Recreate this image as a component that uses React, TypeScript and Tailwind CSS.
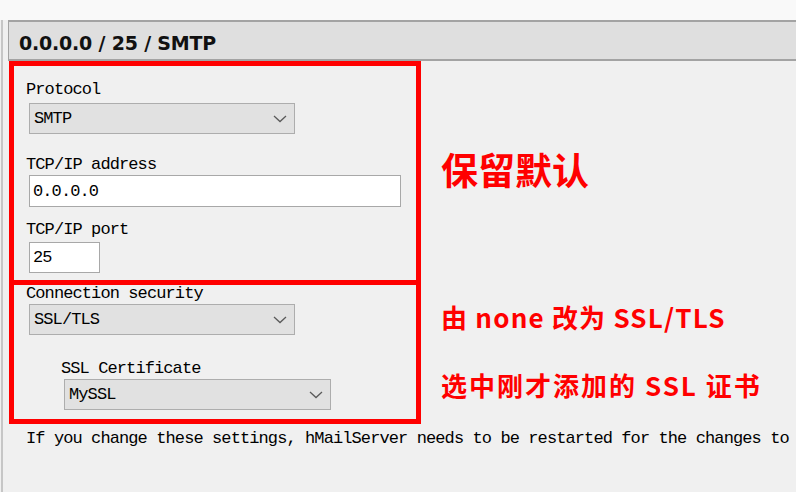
import React from "react";

const mono = "font-['Liberation_Mono',monospace] text-[17px] leading-[17px] tracking-[-0.9px] text-black whitespace-nowrap";

function Chevron() {
  return (
    <svg width="14" height="8" viewBox="0 0 14 8" className="mr-[7px] shrink-0">
      <polyline points="1,1 7,6.5 13,1" fill="none" stroke="#5a5a5a" strokeWidth="1.3" />
    </svg>
  );
}

function Select({ value, w, ml, mt }: { value: string; w: string; ml: string; mt: string }) {
  return (
    <div className={`${w} ${ml} ${mt} h-[31px] bg-[#e1e1e1] border border-[#adadad] flex items-center pl-[4px]`}>
      <span className={`${mono} flex-1`}>{value}</span>
      <Chevron />
    </div>
  );
}

export default function App() {
  return (
    <div className="w-[796px] h-[492px] bg-[#f0f0f0] flex flex-col overflow-hidden">
      <div className="h-[20px] bg-[#f9f9f9] shrink-0" />
      <div className="flex flex-1 min-h-0">
        <div className="w-[8px] pl-[1px] shrink-0">
          <div className="w-[2px] h-full bg-[#c6c6c6]" />
        </div>
        <div className="flex-1 flex flex-col min-w-0">
          <div className="h-[41px] shrink-0 bg-[#dfdfdf] border-y-2 border-l border-[#a3a3a3] pl-[10px] pt-[12px]">
            <div className="font-['DejaVu_Sans',sans-serif] font-bold text-[19px] leading-[19px] tracking-[-0.2px] text-[#111] whitespace-nowrap">
              0.0.0.0 / 25 / SMTP
            </div>
          </div>
          <div className="flex">
            <div className="ml-[1px] w-[412px] flex flex-col shrink-0">
              <div className="h-[224px] border-[5px] border-[#ff0000] flex flex-col">
                <div className={`${mono} ml-[12px] mt-[15px]`}>Protocol</div>
                <Select value="SMTP" w="w-[266px]" ml="ml-[15px]" mt="mt-[5px]" />
                <div className={`${mono} ml-[12px] mt-[22px]`}>TCP/IP address</div>
                <div className="ml-[15px] mt-[2px] w-[372px] h-[32px] bg-white border border-[#a8a8a8] flex items-center pl-[3px]">
                  <span className={mono}>0.0.0.0</span>
                </div>
                <div className={`${mono} ml-[12px] mt-[14px]`}>TCP/IP port</div>
                <div className="ml-[15px] mt-[4px] w-[71px] h-[31px] bg-white border border-[#a8a8a8] flex items-center pl-[3px]">
                  <span className={mono}>25</span>
                </div>
              </div>
              <div className="h-[139px] border-x-[5px] border-b-[5px] border-t-0 border-[#ff0000] flex flex-col">
                <div className={`${mono} ml-[12px] mt-0`}>Connection security</div>
                <Select value="SSL/TLS" w="w-[266px]" ml="ml-[15px]" mt="mt-[2px]" />
                <div className={`${mono} ml-[47px] mt-[25px]`}>SSL Certificate</div>
                <Select value="MySSL" w="w-[267px]" ml="ml-[50px]" mt="mt-[2px]" />
              </div>
            </div>
            <div className="ml-[20px] flex flex-col font-['Noto_Sans_CJK_SC',sans-serif] font-bold text-[#ff0000] whitespace-nowrap">
              <div className="mt-[90px] text-[37px] leading-[37px]">保留默认</div>
              <div className="mt-[116px] text-[26px] leading-[26px] tracking-[1.2px]">由 none 改为 SSL/TLS</div>
              <div className="mt-[42px] text-[26px] leading-[26px] tracking-[2px]">选中刚才添加的 SSL 证书</div>
            </div>
          </div>
          <div className={`${mono} ml-[18px] mt-[6px]`}>
            If you change these settings, hMailServer needs to be restarted for the changes to
          </div>
        </div>
      </div>
    </div>
  );
}
